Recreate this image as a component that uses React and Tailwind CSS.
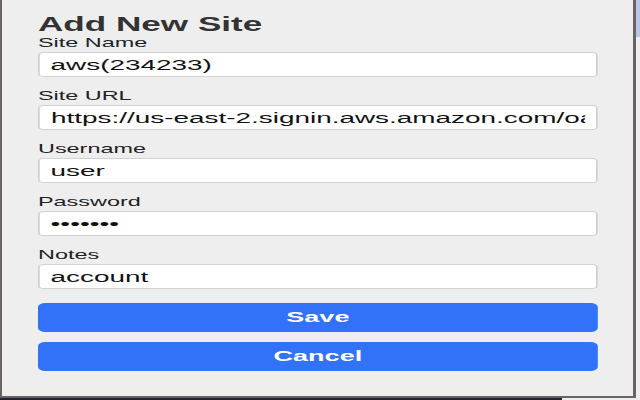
import React from 'react';

const fields = [
  { label: 'Site Name', value: 'aws(234233)' },
  { label: 'Site URL', value: 'https://us-east-2.signin.aws.amazon.com/oauth?response_type=code' },
  { label: 'Username', value: 'user' },
  { label: 'Password', value: 'secret1', type: 'password' },
  { label: 'Notes', value: 'account' },
];

const Field = ({ label, value, type = 'text' }) => (
  <div className="mb-[11px]">
    <label className="block text-[13px] leading-[15px] text-[#222] mb-[2px]">{label}</label>
    <input
      type={type}
      defaultValue={value}
      className="block w-full h-[25px] px-[6px] bg-white border border-[#d2d2d2] rounded-[3px] text-[15.5px] text-[#111] outline-none"
    />
  </div>
);

const App = () => (
  <div className="w-[640px] h-[400px] flex flex-col bg-[#eeeeee] overflow-hidden">
    <div className="flex h-[398px]">
      {/* popup, stretched sideways like the capture */}
      <div className="w-[636px] h-full shrink-0 border-l-2 border-r-[3px] border-b-2 border-[#6b6363] bg-[#eeeeee] overflow-hidden">
        <div className="w-[351px] origin-top-left scale-x-[1.8] px-5 pt-[14px] font-['Liberation_Sans',Arial,sans-serif]">
          <h3 className="text-[19.5px] leading-[21px] font-bold text-[#333]">Add New Site</h3>
          {fields.map((f) => (
            <Field key={f.label} {...f} />
          ))}
          <div className="flex flex-col gap-[10px] mt-[14px]">
            <button className="h-[29px] w-full rounded-[4px] bg-[#3172f8] text-white text-[15px] font-bold">
              Save
            </button>
            <button className="h-[29px] w-full rounded-[4px] bg-[#3172f8] text-white text-[15px] font-bold">
              Cancel
            </button>
          </div>
        </div>
      </div>
      <div className="flex-1 flex flex-col">
        <div className="h-[37px] bg-[#b8c7e5]" />
      </div>
    </div>
    <div className="flex h-[2px]">
      <div className="w-[562px] bg-[#1c2333]" />
    </div>
  </div>
);

export default App;
